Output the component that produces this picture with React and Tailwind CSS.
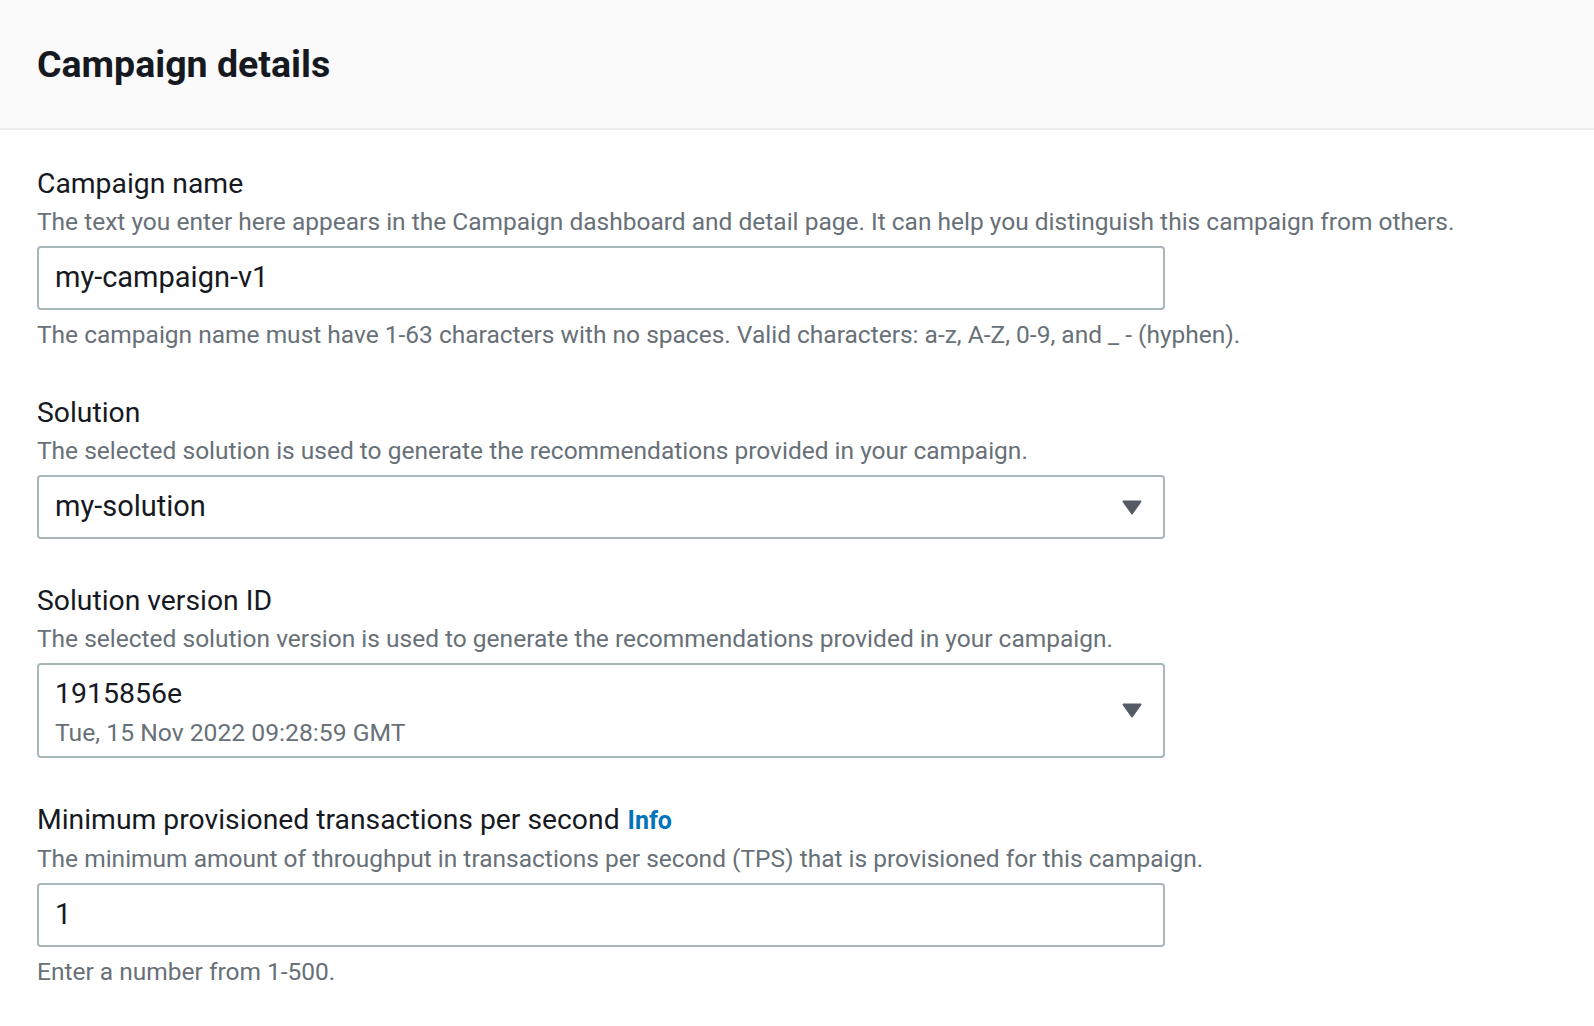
// Campaign details form panel (console style, rendered at 2x scale).
const FONT = "font-['Roboto','Noto_Sans',sans-serif]";

function Caret({ className = "" }) {
  return (
    <svg width="20" height="15" viewBox="0 0 20 15" className={`shrink-0 self-center ${className}`}>
      <path d="M1.5 1.5h17l-8.5 12z" fill="#545b64" stroke="#545b64" strokeWidth="2" strokeLinejoin="round" />
    </svg>
  );
}

function Field({ label, info, description, children, constraint }) {
  return (
    <div className="flex flex-col">
      <div className="flex items-baseline gap-2 text-[28.3px] leading-[44px] text-[#16191f]">
        <span>{label}</span>
        {info && <span className="text-[25px] font-bold text-[#0073bb]">Info</span>}
      </div>
      <div className="text-[24.5px] leading-[32px] text-[#687078]">{description}</div>
      <div className="mt-2 w-[1128px]">{children}</div>
      {constraint && (
        <div className="mt-[9px] text-[24.5px] leading-[32px] text-[#687078]">{constraint}</div>
      )}
    </div>
  );
}

function TextBox({ value }) {
  return (
    <div className="flex h-[64px] items-center rounded-[4px] border-2 border-[#aab7b8] bg-white px-4 text-[29px] text-[#16191f]">
      {value}
    </div>
  );
}

export default function App() {
  return (
    <div className={`min-h-[1026px] w-full bg-white ${FONT}`}>
      <div className="flex h-[130px] items-center border-b-2 border-[#eaeded] bg-[#fafafa] px-[37px]">
        <h2 className="text-[37.5px] font-bold text-[#16191f]">Campaign details</h2>
      </div>
      <div className="flex flex-col gap-10 px-[37px] pt-8">
        <Field
          label="Campaign name"
          description="The text you enter here appears in the Campaign dashboard and detail page. It can help you distinguish this campaign from others."
          constraint="The campaign name must have 1-63 characters with no spaces. Valid characters: a-z, A-Z, 0-9, and _ - (hyphen)."
        >
          <TextBox value="my-campaign-v1" />
        </Field>
        <Field
          label="Solution"
          description="The selected solution is used to generate the recommendations provided in your campaign."
        >
          <div className="flex h-[64px] items-center justify-between rounded-[4px] border-2 border-[#aab7b8] bg-white pl-4 pr-[21px] text-[29px] text-[#16191f]">
            <span>my-solution</span>
            <Caret />
          </div>
        </Field>
        <Field
          label="Solution version ID"
          description="The selected solution version is used to generate the recommendations provided in your campaign."
        >
          <div className="flex h-[95px] items-start justify-between rounded-[4px] border-2 border-[#aab7b8] bg-white pl-4 pr-[21px] pt-[10px]">
            <div className="flex flex-col">
              <span className="text-[28.5px] leading-[38px] text-[#16191f]">1915856e</span>
              <span className="mt-1 text-[24.7px] leading-[32px] text-[#687078]">Tue, 15 Nov 2022 09:28:59 GMT</span>
            </div>
            <Caret className="-mt-[10px]" />
          </div>
        </Field>
        <Field
          label="Minimum provisioned transactions per second"
          info
          description="The minimum amount of throughput in transactions per second (TPS) that is provisioned for this campaign."
          constraint="Enter a number from 1-500."
        >
          <TextBox value="1" />
        </Field>
      </div>
    </div>
  );
}
